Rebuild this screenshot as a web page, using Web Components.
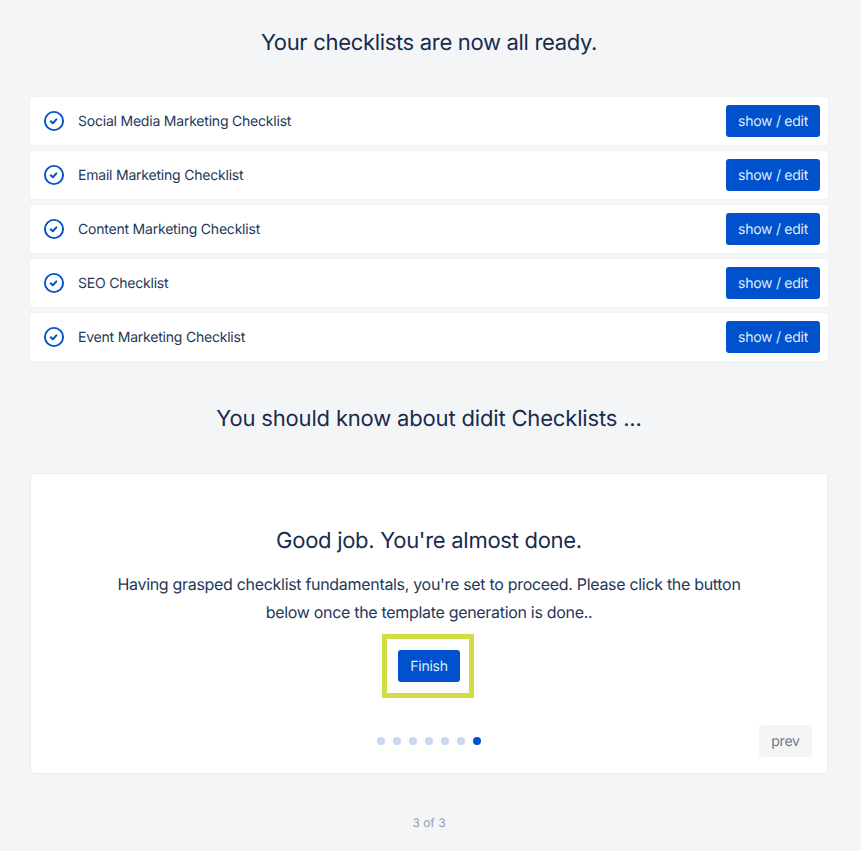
<!DOCTYPE html>
<html>
<head>
<meta charset="utf-8">
<style>
  html, body { margin: 0; padding: 0; }
  body {
    background: #f4f5f7;
    color: #172b4d;
    font-family: Inter, "Liberation Sans", sans-serif;
    text-rendering: geometricPrecision;
  }
</style>
</head>
<body>
<checklist-page>
  <section-title slot="first" style="--title-height:96px;--title-pad-bottom:11px;--title-track:-.32px">Your checklists are now all ready.</section-title>
  <checklist-row>Social Media Marketing Checklist</checklist-row>
  <checklist-row>Email Marketing Checklist</checklist-row>
  <checklist-row>Content Marketing Checklist</checklist-row>
  <checklist-row>SEO Checklist</checklist-row>
  <checklist-row>Event Marketing Checklist</checklist-row>
  <section-title style="--title-height:100px;--title-pad-top:4px;--title-track:-.17px">You should know about didit Checklists ...</section-title>
  <tip-card heading="Good job. You're almost done." total="7" active="6">
    Having grasped checklist fundamentals, you're set to proceed. Please click the button below once the template generation is done..
  </tip-card>
  <page-count>3 of 3</page-count>
</checklist-page>

<script>
// page shell, everything else gets slotted in here
class ChecklistPage extends HTMLElement {
  constructor() {
    super();
    this.attachShadow({ mode: "open" });
    this.shadowRoot.innerHTML = `
      <style>
        :host { display: block; width: 861px; height: 851px; overflow: hidden; padding: 0 33px 0 30px; box-sizing: border-box; }
        .list { display: flex; flex-direction: column; gap: 6px; padding-top: 1px; }
      </style>
      <slot name="first"></slot>
      <div class="list"><slot></slot></div>`;
  }
}

class SectionTitle extends HTMLElement {
  constructor() {
    super();
    this.attachShadow({ mode: "open" });
    this.shadowRoot.innerHTML = `
      <style>
        :host { display: flex; align-items: center; justify-content: center; height: var(--title-height); font-size: 22px; letter-spacing: var(--title-track); color: #172b4d; padding: var(--title-pad-top, 0) 0 var(--title-pad-bottom, 0); box-sizing: border-box; }
      </style>
      <slot></slot>`;
  }
}

class ChecklistRow extends HTMLElement {
  constructor() {
    super();
    this.attachShadow({ mode: "open" });
    this.shadowRoot.innerHTML = `
      <style>
        :host { display: flex; align-items: center; height: 48px; box-sizing: border-box; background: #fff; box-shadow: 0 0 0 1px #eff1f4; border-radius: 3px; padding: 0 8px 0 13px; font-size: 14px; letter-spacing: -.21px; color: #253858; }
        svg { width: 22px; height: 22px; margin-right: 13px; flex: none; }
        .name { flex: 1; }
      </style>
      <svg viewBox="0 0 22 22" fill="none" stroke="#0052cc">
        <circle cx="11" cy="11" r="9.1" stroke-width="1.9"/>
        <path d="M7.7 11.3l2.1 1.9 3.6-3.8" stroke-width="2" stroke-linecap="round" stroke-linejoin="round"/>
      </svg>
      <span class="name"><slot></slot></span>
      <action-button>show / edit</action-button>`;
  }
}

class ActionButton extends HTMLElement {
  constructor() {
    super();
    this.attachShadow({ mode: "open" });
    this.shadowRoot.innerHTML = `
      <style>
        :host { display: inline-flex; align-items: center; justify-content: center; height: 32px; padding: 0 12px; box-sizing: border-box; background: #0052cc; color: #deebff; border-radius: 3px; font-size: 14px; letter-spacing: -.27px; }
      </style>
      <slot></slot>`;
  }
}

class TipCard extends HTMLElement {
  constructor() {
    super();
    this.attachShadow({ mode: "open" });
    const total = Number(this.getAttribute("total"));
    const active = Number(this.getAttribute("active"));
    let dots = "";
    for (let i = 0; i < total; i++) {
      dots += `<i class="${i === active ? "on" : ""}"></i>`;
    }
    this.shadowRoot.innerHTML = `
      <style>
        :host { display: flex; flex-direction: column; align-items: center; height: 301px; box-sizing: border-box; background: #fff; border: 1px solid #ebecf0; border-radius: 3px; padding: 52px 15px 16px; }
        h2 { margin: 0; font-size: 22px; font-weight: 400; line-height: 30px; letter-spacing: -.28px; color: #172b4d; }
        p { margin: 14px 0 0; width: 660px; text-align: center; font-size: 16px; line-height: 28px; letter-spacing: -.31px; color: #253858; }
        .mark { margin: 8px 0 0 -2px; border: 5px solid #d2dc45; padding: 11px 9px 11px 11px; display: flex; }
        .mark action-button { width: 62px; padding: 0; }
        .foot { margin-top: auto; width: 100%; display: grid; grid-template-columns: 1fr auto 1fr; align-items: center; }
        .dots { grid-column: 2; display: flex; gap: 8px; }
        .dots i { width: 8px; height: 8px; border-radius: 50%; background: #c7d7f0; }
        .dots i.on { background: #0052cc; }
        .prev { justify-self: end; display: flex; align-items: center; justify-content: center; width: 53px; height: 32px; background: #f4f5f7; color: #6b778c; font-size: 14px; letter-spacing: -.2px; border-radius: 2px; }
      </style>
      <h2>${this.getAttribute("heading")}</h2>
      <p><slot></slot></p>
      <div class="mark"><action-button>Finish</action-button></div>
      <div class="foot">
        <div class="dots">${dots}</div>
        <div class="prev">prev</div>
      </div>`;
  }
}

class PageCount extends HTMLElement {
  constructor() {
    super();
    this.attachShadow({ mode: "open" });
    this.shadowRoot.innerHTML = `
      <style>
        :host { display: block; margin-top: 33px; text-align: center; font-size: 12px; line-height: 20px; color: #97a0af; }
      </style>
      <slot></slot>`;
  }
}

customElements.define("checklist-page", ChecklistPage);
customElements.define("section-title", SectionTitle);
customElements.define("action-button", ActionButton);
customElements.define("checklist-row", ChecklistRow);
customElements.define("tip-card", TipCard);
customElements.define("page-count", PageCount);
</script>
</body>
</html>
